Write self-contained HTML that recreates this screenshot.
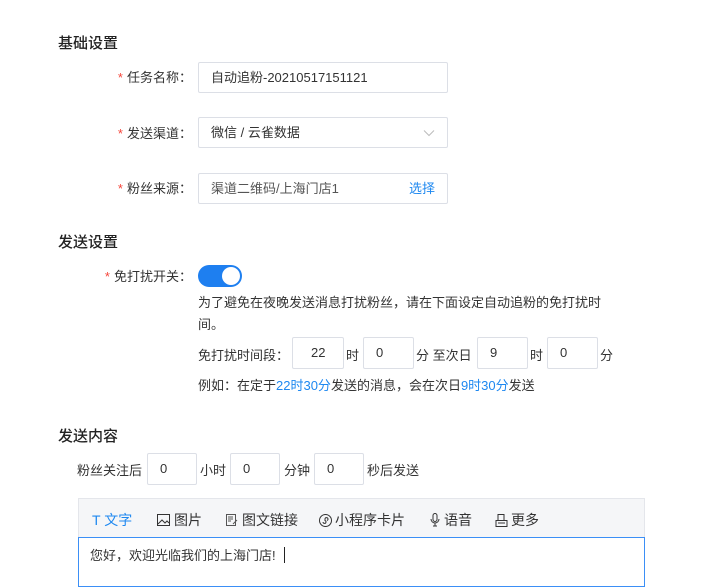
<!DOCTYPE html>
<html><head><meta charset="utf-8"><style>
*{margin:0;padding:0;box-sizing:border-box}
body{width:707px;height:582px;overflow:hidden;background:#fff;font-family:"Liberation Sans","Noto Sans CJK SC",sans-serif;font-size:13px;color:#333;position:relative}
.a{position:absolute;white-space:nowrap}
.h{font-size:15px;color:#222;font-weight:500}
.lbl{text-align:right;width:140px}
.lbl b{color:#f5453a;font-weight:normal;margin-right:4px}
.in{position:absolute;border:1px solid #dcdfe6;border-radius:2px;background:#fff;line-height:29px;padding-left:12px}
.tb{position:absolute;top:510px;font-size:14px;color:#333}
.bl,.tb.bl{color:#1e88f0}
</style></head><body>
<div class="a h" style="left:58px;top:32px">基础设置</div>
<div class="a lbl" style="left:52px;top:67px"><b>*</b>任务名称：</div>
<div class="in" style="left:198px;top:62px;width:250px;height:31px">自动追粉-20210517151121</div>
<div class="a lbl" style="left:52px;top:123px"><b>*</b>发送渠道：</div>
<div class="in" style="left:198px;top:117px;width:250px;height:31px">微信 / 云雀数据
<svg style="position:absolute;right:12px;top:11px" width="12" height="8" viewBox="0 0 12 8"><path d="M1 1.5l5 5 5-5" fill="none" stroke="#bbb" stroke-width="1"/></svg></div>
<div class="a lbl" style="left:52px;top:178px"><b>*</b>粉丝来源：</div>
<div class="in" style="left:198px;top:173px;width:250px;height:31px;color:#555">渠道二维码/上海门店1<span class="bl" style="position:absolute;right:12px">选择</span></div>

<div class="a h" style="left:58px;top:231px">发送设置</div>
<div class="a lbl" style="left:52px;top:266px"><b>*</b>免打扰开关：</div>
<div class="a" style="left:198px;top:265px;width:44px;height:22px;border-radius:11px;background:#1e7ff0"><div style="position:absolute;right:2px;top:2px;width:18px;height:18px;border-radius:9px;background:#fff"></div></div>
<div class="a" style="left:198px;top:292px;line-height:22px;white-space:normal;width:420px">为了避免在夜晚发送消息打扰粉丝，请在下面设定自动追粉的免打扰时<br>间。</div>
<div class="a" style="left:198px;top:345px">免打扰时间段：</div>
<div class="in" style="left:292px;top:337px;width:52px;height:32px;line-height:30px;padding-left:18px">22</div>
<div class="a" style="left:346px;top:345px">时</div>
<div class="in" style="left:363px;top:337px;width:51px;height:32px;line-height:30px">0</div>
<div class="a" style="left:416px;top:345px">分 至次日</div>
<div class="in" style="left:477px;top:337px;width:51px;height:32px;line-height:30px">9</div>
<div class="a" style="left:530px;top:345px">时</div>
<div class="in" style="left:547px;top:337px;width:51px;height:32px;line-height:30px">0</div>
<div class="a" style="left:600px;top:345px">分</div>
<div class="a" style="left:198px;top:375px">例如：在定于<span class="bl">22时30分</span>发送的消息，会在次日<span class="bl">9时30分</span>发送</div>

<div class="a h" style="left:58px;top:425px">发送内容</div>
<div class="a" style="left:77px;top:460px">粉丝关注后</div>
<div class="in" style="left:147px;top:453px;width:50px;height:32px;line-height:30px;padding-left:12px">0</div>
<div class="a" style="left:200px;top:460px">小时</div>
<div class="in" style="left:230px;top:453px;width:50px;height:32px;line-height:30px;padding-left:12px">0</div>
<div class="a" style="left:284px;top:460px">分钟</div>
<div class="in" style="left:314px;top:453px;width:50px;height:32px;line-height:30px;padding-left:12px">0</div>
<div class="a" style="left:367px;top:460px">秒后发送</div>

<div class="a" style="left:78px;top:498px;width:567px;height:40px;background:#f5f6f8;border:1px solid #e4e6eb"></div>
<div class="tb bl" style="left:92px">T 文字</div>
<div class="tb" style="left:157px"><svg width="13" height="12" viewBox="0 0 13 12" style="vertical-align:-1px;margin-right:4px"><rect x="0.5" y="0.5" width="12" height="11" fill="none" stroke="#333"/><path d="M1 10l4-4 3 3 2-2 2 2" fill="none" stroke="#333"/></svg>图片</div>
<div class="tb" style="left:226px"><svg width="12" height="12" viewBox="0 0 12 12" style="vertical-align:-1px;margin-right:4px"><rect x="0.5" y="0.5" width="9" height="11" fill="none" stroke="#555"/><path d="M2 3h5M2 5h5M2 7h3M7 10l4-4" stroke="#555" fill="none"/></svg>图文链接</div>
<div class="tb" style="left:319px"><svg width="13" height="13" viewBox="0 0 13 13" style="vertical-align:-2px;margin-right:3px"><circle cx="6.5" cy="6.5" r="6" fill="none" stroke="#333"/><path d="M4 8a1.5 1.5 0 1 0 2-1.5V5a1.5 1.5 0 1 1 2 1.5" fill="none" stroke="#333"/></svg>小程序卡片</div>
<div class="tb" style="left:430px"><svg width="10" height="14" viewBox="0 0 10 14" style="vertical-align:-2px;margin-right:4px"><rect x="3" y="0.5" width="4" height="8" rx="2" fill="none" stroke="#333"/><path d="M1 6a4 4 0 0 0 8 0M5 10v3M3 13h4" fill="none" stroke="#333"/></svg>语音</div>
<div class="tb" style="left:495px"><svg width="13" height="13" viewBox="0 0 13 13" style="vertical-align:-2px;margin-right:3px"><path d="M3 0.5h6v6H3zM1 6.5h11v6H1zM3 9h7" fill="none" stroke="#333"/></svg>更多</div>
<div class="a" style="left:78px;top:537px;width:567px;height:50px;border:1px solid #3b8ff6;background:#fff"></div>
<div class="a" style="left:90px;top:545px">您好，欢迎光临我们的上海门店!<span style="display:inline-block;width:1px;height:16px;background:#222;margin-left:8px;vertical-align:-3px"></span></div>
</body></html>
